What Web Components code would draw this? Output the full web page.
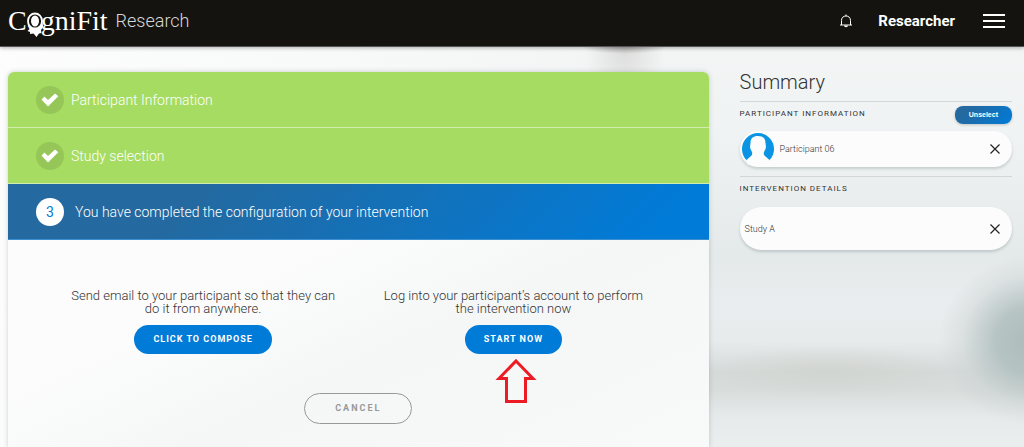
<!DOCTYPE html>
<html lang="en">
<head>
<meta charset="utf-8">
<meta name="viewport" content="width=device-width, initial-scale=1">
<title>CogniFit Research</title>
<style>
  body {
    margin: 0;
    min-height: 100vh;
    font-family: Roboto, "Liberation Sans", sans-serif;
    font-weight: 300;
    color: #333;
    overflow: hidden;
    background:
      radial-gradient(ellipse 44px 8px at 61% 46px, rgb(110 105 105 / 0.5), transparent),
      radial-gradient(ellipse 40px 60px at 61% 50px, rgb(205 205 203 / 0.6), transparent),
      radial-gradient(ellipse 96px 86px at 101% 76%, rgb(172 186 186), rgb(178 192 192 / 0.9) 40%, rgb(200 208 208 / 0.4) 75%, transparent),
      radial-gradient(ellipse 130px 26px at 81% 83%, rgb(208 211 206 / 0.8), transparent),
      linear-gradient(100deg, #fdfdfd 0%, #f8f9f9 30%, transparent 58%),
      linear-gradient(#f3f5f5 10%, #f0f3f3 30%, #e4e9ea 57%, #eaedef 68%, #e8ebec 76%, #d6dbda 83%, #d8dcdb 87%, #e6eaea 93%, #ebeeee 100%);
  }
</style>
</head>
<body>
<research-page></research-page>

<script>
class SiteHeader extends HTMLElement {
  constructor() {
    super();
    this.attachShadow({ mode: 'open' });
  }

  connectedCallback() {
    this.shadowRoot.innerHTML = `
      <style>
        :host {
          display: flex;
          align-items: center;
          justify-content: space-between;
          box-sizing: border-box;
          height: 47px;
          padding: 0 19px 4px 8px;
          background: #14130f;
          border-bottom: 1px solid #55555a;
          box-shadow: 0 1px 4px rgb(0 0 0 / 0.3);
          color: #fff;
        }

        .logo {
          display: flex;
          align-items: center;
          gap: 8px;
          position: relative;
          color: inherit;
          text-decoration: none;
        }

        .name {
          font: 400 28px/40px "Liberation Serif", serif;
        }

        .product {
          font-size: 18px;
          line-height: 38px;
          color: #d8d8d8;
        }

        .head {
          position: absolute;
          left: 18px;
          top: 11px;
        }

        nav {
          display: flex;
          align-items: center;
        }

        button {
          display: flex;
          padding: 0;
          border: 0;
          background: none;
          color: inherit;
        }

        .user {
          margin: 0 28px 0 25px;
          font-size: 15px;
          font-weight: 700;
          color: inherit;
          text-decoration: none;
        }
      </style>
      <a class="logo" href="#">
        <span class="name">CogniFit</span>
        <svg class="head" width="18" height="25" viewBox="0 0 18 25" aria-hidden="true">
          <path fill="#fff" d="M2 12L3.500 17L1.500 19L4 20V22L7.500 21.500L10.500 25L13 21.500L15.500 21L15 18L17.500 14.500L16 10Z"/>
          <ellipse cx="9" cy="9" rx="7" ry="7.500" fill="#14130f" stroke="#fff" stroke-width="1.800"/>
          <ellipse cx="9" cy="9" rx="4" ry="5.500" fill="#fff"/>
        </svg>
        <span class="product">Research</span>
      </a>
      <nav>
        <button type="button" aria-label="Notifications">
          <svg width="14" height="14" viewBox="0 0 14 14" fill="none" stroke="#fff">
            <path d="M1 11H13M2.500 11V6.500C2.500 3.500 4.500 2 7 2S11.500 3.500 11.500 6.500V11M7 0.500V2"/>
            <path fill="#fff" stroke="none" d="M5 11.500H9C9 12.600 8 13.200 7 13.200S5 12.600 5 11.500Z"/>
          </svg>
        </button>
        <a class="user" href="#">Researcher</a>
        <button type="button" aria-label="Menu">
          <svg width="22" height="14" viewBox="0 0 22 14" fill="#fff">
            <path d="M0 0H22V2H0ZM0 6H22V8H0ZM0 12H22V14H0Z"/>
          </svg>
        </button>
      </nav>
    `;
  }
}

class WizardStep extends HTMLElement {
  constructor() {
    super();
    this.attachShadow({ mode: 'open' });
  }

  connectedCallback() {
    const number = this.getAttribute('number');
    const tick = `
      <svg width="18" height="14" viewBox="0 0 18 14" aria-label="Done">
        <path fill="#fff" d="M0.500 6.500L3.500 3.500L7 7L14 0.500L17.300 3.200L7 13.500Z"/>
      </svg>`;

    this.shadowRoot.innerHTML = `
      <style>
        :host {
          display: flex;
          align-items: center;
          box-sizing: border-box;
          height: 56px;
          padding: 0 28px;
          gap: 7px;
          background: #a6dc61;
          border-bottom: 1px solid #d3edb0;
          font-size: 14px;
          color: #fff;
        }

        :host([number]) {
          gap: 11px;
          background: linear-gradient(135deg, #24699f 25%, #007bd8 92%);
          border-bottom-color: #3c8fd0;
        }

        .badge {
          display: flex;
          align-items: center;
          justify-content: center;
          width: 28px;
          height: 28px;
          border-radius: 50%;
          background: #95c657;
        }

        :host([number]) .badge {
          background: #fff;
          color: #007bd8;
          font-weight: 400;
        }
      </style>
      <span class="badge">${number || tick}</span>
      <slot></slot>
    `;
  }
}

class PillButton extends HTMLElement {
  constructor() {
    super();
    this.attachShadow({ mode: 'open' });
  }

  connectedCallback() {
    this.shadowRoot.innerHTML = `
      <style>
        :host {
          display: inline-flex;
        }

        button {
          padding: 0 19px;
          border: 0;
          border-radius: 16px;
          background: #007bd8;
          color: #fff;
          font: 700 9px/29px Roboto, "Liberation Sans", sans-serif;
          letter-spacing: 1px;
          white-space: nowrap;
        }

        :host([kind="outline"]) button {
          padding: 0 30px;
          border: 1px solid #999;
          background: none;
          color: #999;
          letter-spacing: 2px;
        }

        :host([kind="small"]) button {
          padding: 0 14px;
          border-radius: 8px;
          background: linear-gradient(135deg, #24699f 20%, #007bd8);
          box-shadow: 0 1px 3px rgb(0 0 0 / 0.2);
          font: 700 7px/18px "Liberation Sans", sans-serif;
          letter-spacing: 0;
        }
      </style>
      <button type="button"><slot></slot></button>
    `;
  }
}

class ActionOption extends HTMLElement {
  constructor() {
    super();
    this.attachShadow({ mode: 'open' });
  }

  connectedCallback() {
    const arrow = `
      <svg class="arrow" width="44" height="46" viewBox="0 0 44 46" aria-hidden="true">
        <path fill="none" stroke="#ed1c24" stroke-width="3" d="M22 3L39 20.500H31.500V43.500H12.500V20.500H5Z"/>
      </svg>`;

    this.shadowRoot.innerHTML = `
      <style>
        :host {
          display: flex;
          flex: 1;
          flex-direction: column;
          align-items: center;
          gap: 10px;
          padding: 0 20px;
          text-align: center;
        }

        p {
          margin: 0;
          max-width: 270px;
          font-size: 13px;
          line-height: 13px;
        }

        .action {
          display: flex;
          position: relative;
        }

        .arrow {
          position: absolute;
          left: calc(50% - 19px);
          top: calc(100% + 4px);
        }
      </style>
      <p><slot></slot></p>
      <div class="action">
        <slot name="action"></slot>
        ${this.hasAttribute('pointed') ? arrow : ''}
      </div>
    `;
  }
}

class SummaryItem extends HTMLElement {
  constructor() {
    super();
    this.attachShadow({ mode: 'open' });
  }

  connectedCallback() {
    const avatar = `
      <svg width="32" height="32" viewBox="0 0 32 32" aria-hidden="true">
        <circle cx="16" cy="16" r="16" fill="#0b94e3"/>
        <path fill="#fcfcfc" d="M16 3C11 3 8.500 5.500 8.500 10C8.500 12 7.500 13 8.500 16L10 19C10.500 21 10 22 9 23L4.500 27L6 32H26L27.500 27L23 23C22 22 21.500 21 22 19L23.500 16C24.500 13 23.500 12 23.500 10C23.500 5.500 21 3 16 3Z"/>
      </svg>`;

    this.shadowRoot.innerHTML = `
      <style>
        :host {
          display: flex;
          align-items: center;
          gap: 6px;
          box-sizing: border-box;
          min-height: 43px;
          padding: 0 12px 0 5px;
          border-radius: 22px;
          background: #fcfcfc;
          box-shadow: 0 2px 3px rgb(60 80 80 / 0.22);
          font-size: 9px;
        }

        :host([person]) {
          min-height: 36px;
          padding-left: 2px;
        }

        .label {
          flex: 1;
        }

        button {
          display: flex;
          padding: 0;
          border: 0;
          background: none;
        }
      </style>
      ${this.hasAttribute('person') ? avatar : ''}
      <span class="label"><slot></slot></span>
      <button type="button" aria-label="Remove">
        <svg width="10" height="10" viewBox="0 0 10 10" stroke="#222" stroke-width="1.200">
          <path d="M0.500 0.500L9.500 9.500M9.500 0.500L0.500 9.500"/>
        </svg>
      </button>
    `;
  }
}

class SummaryPanel extends HTMLElement {
  constructor() {
    super();
    this.attachShadow({ mode: 'open' });
  }

  connectedCallback() {
    this.shadowRoot.innerHTML = `
      <style>
        :host {
          display: block;
        }

        h2 {
          margin: 0 0 9px;
          font-size: 20px;
          font-weight: 300;
          line-height: 20px;
        }

        section {
          border-top: 1px solid #d2d7d8;
          padding-bottom: 9px;
        }

        header {
          display: flex;
          justify-content: space-between;
          padding: 4px 0 7px;
        }

        h3 {
          margin: 0;
          font-size: 8px;
          font-weight: 400;
          line-height: 15px;
          letter-spacing: 1px;
          text-transform: uppercase;
        }

        .details header {
          padding-bottom: 11px;
        }
      </style>
      <h2>Summary</h2>
      <section>
        <header>
          <h3>Participant information</h3>
          <pill-button kind="small">Unselect</pill-button>
        </header>
        <summary-item person>Participant 06</summary-item>
      </section>
      <section class="details">
        <header>
          <h3>Intervention details</h3>
        </header>
        <summary-item>Study A</summary-item>
      </section>
    `;
  }
}

class ResearchPage extends HTMLElement {
  constructor() {
    super();
    this.attachShadow({ mode: 'open' });
  }

  connectedCallback() {
    this.shadowRoot.innerHTML = `
      <style>
        :host {
          display: flex;
          flex-direction: column;
          min-height: 100vh;
        }

        main {
          display: grid;
          flex: 1;
          grid-template-columns: 72fr 28fr;
          gap: 31px;
          padding: 25px 12px 0 8px;
        }

        .wizard {
          overflow: hidden;
          border-radius: 6px 6px 0 0;
          background: linear-gradient(155deg, #fcfcfc 45%, #f5f7f7 65%, #f8f9f9);
          box-shadow: 0 0 5px rgb(60 80 80 / 0.25);
        }

        .options {
          display: flex;
          padding: 49px 40px 39px;
        }

        .footer {
          display: flex;
          justify-content: center;
          padding-bottom: 24px;
        }

        summary-panel {
          min-width: 0;
        }
      </style>
      <site-header></site-header>
      <main>
        <div class="wizard">
          <wizard-step>Participant Information</wizard-step>
          <wizard-step>Study selection</wizard-step>
          <wizard-step number="3">You have completed the configuration of your intervention</wizard-step>
          <div class="options">
            <action-option>
              Send email to your participant so that they can do it from anywhere.
              <pill-button slot="action">CLICK TO COMPOSE</pill-button>
            </action-option>
            <action-option pointed>
              Log into your participant’s account to perform the intervention now
              <pill-button slot="action">START NOW</pill-button>
            </action-option>
          </div>
          <div class="footer">
            <pill-button kind="outline">CANCEL</pill-button>
          </div>
        </div>
        <summary-panel></summary-panel>
      </main>
    `;
  }
}

customElements.define('site-header', SiteHeader);
customElements.define('wizard-step', WizardStep);
customElements.define('pill-button', PillButton);
customElements.define('action-option', ActionOption);
customElements.define('summary-item', SummaryItem);
customElements.define('summary-panel', SummaryPanel);
customElements.define('research-page', ResearchPage);
</script>
</body>
</html>
